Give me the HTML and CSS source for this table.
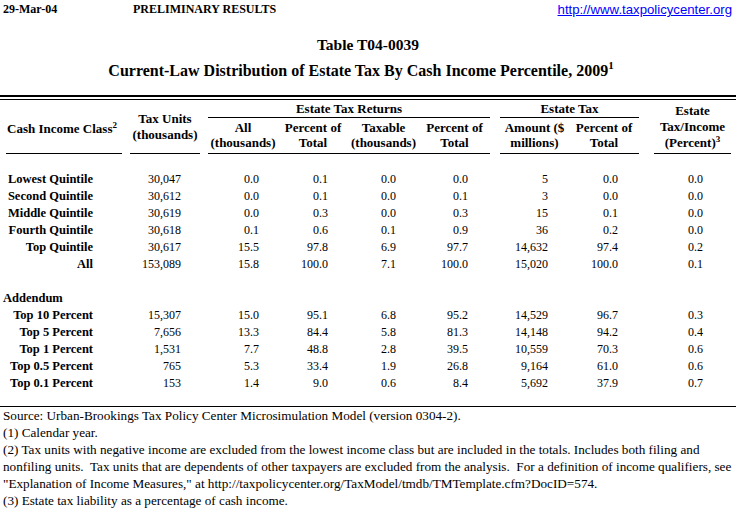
FILE: index.html
```html
<!DOCTYPE html>
<html>
<head>
<meta charset="utf-8">
<link rel="stylesheet" href="styles.css">
</head>
<body>
<div class="page">
  <div class="topbar">
    <span class="date">29-Mar-04</span>
    <span class="prelim">PRELIMINARY RESULTS</span>
    <a class="link" href="#">http://www.taxpolicycenter.org</a>
  </div>
  <div class="titles">
    <div class="t1">Table T04-0039</div>
    <div class="t2">Current-Law Distribution of Estate Tax By Cash Income Percentile, 2009<span class="fn big">1</span></div>
  </div>
  <div class="double-rule"></div>
  <table class="dist">
    <colgroup>
      <col class="w6"><col class="w116"><col class="w8"><col class="w70"><col class="w8">
      <col class="w70"><col class="w70"><col class="w71"><col class="w71"><col class="w10">
      <col class="w69"><col class="w70"><col class="w15"><col class="w77"><col class="w5">
    </colgroup>
    <thead>
      <tr class="h1">
        <th></th>
        <th rowspan="2" class="ul lab">Cash Income Class<span class="fn">2</span></th>
        <th></th>
        <th rowspan="2" class="ul units">Tax Units<br>(thousands)</th>
        <th></th>
        <th colspan="4" class="ul grp">Estate Tax Returns</th>
        <th></th>
        <th colspan="2" class="ul grp">Estate Tax</th>
        <th></th>
        <th rowspan="2" class="ul ratio">Estate<br>Tax/Income<br>(Percent)<span class="fn">3</span></th>
        <th></th>
      </tr>
      <tr class="h2">
        <th></th><th></th><th></th>
        <th class="ul sub">All<br>(thousands)</th>
        <th class="ul sub">Percent of<br>Total</th>
        <th class="ul sub">Taxable<br>(thousands)</th>
        <th class="ul sub">Percent of<br>Total</th>
        <th></th>
        <th class="ul sub">Amount ($<br>millions)</th>
        <th class="ul sub">Percent of<br>Total</th>
        <th></th><th></th>
      </tr>
    </thead>
    <tbody>
      <tr class="gap17"><td colspan="15"></td></tr>
      <tr><td></td><td class="rl">Lowest Quintile</td><td></td><td class="n b">30,047</td><td></td><td class="n c">0.0</td><td class="n d">0.1</td><td class="n e">0.0</td><td class="n f">0.0</td><td></td><td class="n g">5</td><td class="n h">0.0</td><td></td><td class="n i">0.0</td><td></td></tr>
      <tr><td></td><td class="rl">Second Quintile</td><td></td><td class="n b">30,612</td><td></td><td class="n c">0.0</td><td class="n d">0.1</td><td class="n e">0.0</td><td class="n f">0.1</td><td></td><td class="n g">3</td><td class="n h">0.0</td><td></td><td class="n i">0.0</td><td></td></tr>
      <tr><td></td><td class="rl">Middle Quintile</td><td></td><td class="n b">30,619</td><td></td><td class="n c">0.0</td><td class="n d">0.3</td><td class="n e">0.0</td><td class="n f">0.3</td><td></td><td class="n g">15</td><td class="n h">0.1</td><td></td><td class="n i">0.0</td><td></td></tr>
      <tr><td></td><td class="rl">Fourth Quintile</td><td></td><td class="n b">30,618</td><td></td><td class="n c">0.1</td><td class="n d">0.6</td><td class="n e">0.1</td><td class="n f">0.9</td><td></td><td class="n g">36</td><td class="n h">0.2</td><td></td><td class="n i">0.0</td><td></td></tr>
      <tr><td></td><td class="rl">Top Quintile</td><td></td><td class="n b">30,617</td><td></td><td class="n c">15.5</td><td class="n d">97.8</td><td class="n e">6.9</td><td class="n f">97.7</td><td></td><td class="n g">14,632</td><td class="n h">97.4</td><td></td><td class="n i">0.2</td><td></td></tr>
      <tr><td></td><td class="rl">All</td><td></td><td class="n b">153,089</td><td></td><td class="n c">15.8</td><td class="n d">100.0</td><td class="n e">7.1</td><td class="n f">100.0</td><td></td><td class="n g">15,020</td><td class="n h">100.0</td><td></td><td class="n i">0.1</td><td></td></tr>
      <tr class="gap17"><td colspan="15"></td></tr>
      <tr><td colspan="2" class="add">Addendum</td><td colspan="13"></td></tr>
      <tr><td></td><td class="rl">Top 10 Percent</td><td></td><td class="n b">15,307</td><td></td><td class="n c">15.0</td><td class="n d">95.1</td><td class="n e">6.8</td><td class="n f">95.2</td><td></td><td class="n g">14,529</td><td class="n h">96.7</td><td></td><td class="n i">0.3</td><td></td></tr>
      <tr><td></td><td class="rl">Top 5 Percent</td><td></td><td class="n b">7,656</td><td></td><td class="n c">13.3</td><td class="n d">84.4</td><td class="n e">5.8</td><td class="n f">81.3</td><td></td><td class="n g">14,148</td><td class="n h">94.2</td><td></td><td class="n i">0.4</td><td></td></tr>
      <tr><td></td><td class="rl">Top 1 Percent</td><td></td><td class="n b">1,531</td><td></td><td class="n c">7.7</td><td class="n d">48.8</td><td class="n e">2.8</td><td class="n f">39.5</td><td></td><td class="n g">10,559</td><td class="n h">70.3</td><td></td><td class="n i">0.6</td><td></td></tr>
      <tr><td></td><td class="rl">Top 0.5 Percent</td><td></td><td class="n b">765</td><td></td><td class="n c">5.3</td><td class="n d">33.4</td><td class="n e">1.9</td><td class="n f">26.8</td><td></td><td class="n g">9,164</td><td class="n h">61.0</td><td></td><td class="n i">0.6</td><td></td></tr>
      <tr><td></td><td class="rl">Top 0.1 Percent</td><td></td><td class="n b">153</td><td></td><td class="n c">1.4</td><td class="n d">9.0</td><td class="n e">0.6</td><td class="n f">8.4</td><td></td><td class="n g">5,692</td><td class="n h">37.9</td><td></td><td class="n i">0.7</td><td></td></tr>
      <tr class="gap14"><td colspan="15"></td></tr>
    </tbody>
  </table>
  <div class="notes">
    <div class="note">Source: Urban-Brookings Tax Policy Center Microsimulation Model (version 0304-2).</div>
    <div class="note">(1) Calendar year.</div>
    <div class="note">(2) Tax units with negative income are excluded from the lowest income class but are included in the totals. Includes both filing and</div>
    <div class="note">nonfiling units.  Tax units that are dependents of other taxpayers are excluded from the analysis.  For a definition of income qualifiers, see</div>
    <div class="note">"Explanation of Income Measures," at http://taxpolicycenter.org/TaxModel/tmdb/TMTemplate.cfm?DocID=574.</div>
    <div class="note">(3) Estate tax liability as a percentage of cash income.</div>
  </div>
</div>
</body>
</html>
```

FILE: styles.css
```css
html, body {
  margin: 0;
  padding: 0;
  background: #fff;
}
body {
  color: #000;
  font-family: "Liberation Serif", "Times New Roman", serif;
}
.page {
  width: 736px;
  overflow: hidden;
}
.topbar {
  display: flex;
  align-items: center;
  height: 19px;
  font-size: 12px;
  font-weight: bold;
}
.date {
  margin-left: 3px;
  width: 130px;
}
.link {
  margin-left: auto;
  margin-right: 4px;
  font-family: "Liberation Sans", Arial, sans-serif;
  font-weight: normal;
  font-size: 13.2px;
  color: #0000ff;
  text-decoration: underline;
}
.titles {
  padding-top: 13px;
  padding-bottom: 11px;
  text-align: center;
  font-weight: bold;
}
.t1, .t2 {
  height: 26px;
  line-height: 26px;
}
.t1 {
  font-size: 15.5px;
}
.t2 {
  font-size: 16px;
  padding-right: 14px;
}
.fn {
  font-size: 9px;
  line-height: 0;
  vertical-align: 5px;
}
.fn.big {
  font-size: 11px;
  vertical-align: 7px;
}
.double-rule {
  height: 2px;
  border-top: 2px solid #000;
  border-bottom: 1px solid #000;
}
.dist {
  width: 736px;
  table-layout: fixed;
  border-collapse: collapse;
  border-spacing: 0;
  font-size: 12px;
}
.w5 { width: 5px; }
.w6 { width: 6px; }
.w8 { width: 8px; }
.w10 { width: 10px; }
.w15 { width: 15px; }
.w69 { width: 69px; }
.w70 { width: 70px; }
.w71 { width: 71px; }
.w77 { width: 77px; }
.w116 { width: 116px; }
.dist th, .dist td {
  padding: 0;
  white-space: nowrap;
}
.dist th {
  font-weight: bold;
  font-size: 13px;
  text-align: center;
  line-height: 16px;
}
.h1 th { height: 17px; }
.h2 th { height: 33px; }
.ul {
  border-bottom: 1px solid #000;
}
.lab {
  text-align: left !important;
  padding-left: 1px !important;
  padding-top: 5px !important;
}
.units {
  vertical-align: middle;
}
.ratio {
  line-height: 16px !important;
  vertical-align: middle;
}
.grp {
  vertical-align: middle;
}
.sub {
  vertical-align: top;
  line-height: 15px !important;
  padding-top: 2px !important;
}
.dist td {
  height: 17px;
  line-height: 17px;
}
.gap17 td { height: 17px; }
.gap14 td { height: 14px; }
.rl {
  font-weight: bold;
  font-size: 12.5px;
  text-align: right;
  padding-right: 29px !important;
}
.add {
  font-weight: bold;
  font-size: 12.5px;
  text-align: left;
  padding-left: 3px !important;
}
.n { text-align: right; }
.n.b { padding-right: 19px; }
.n.c { padding-right: 19px; }
.n.d { padding-right: 20px; }
.n.e { padding-right: 23px; }
.n.f { padding-right: 22px; }
.n.g { padding-right: 21px; }
.n.h { padding-right: 21px; }
.n.i { padding-right: 28px; }
.notes {
  border-top: 1px solid #000;
  font-size: 13.2px;
}
.note {
  height: 17px;
  line-height: 17px;
  padding-left: 3px;
  white-space: pre;
}
```
